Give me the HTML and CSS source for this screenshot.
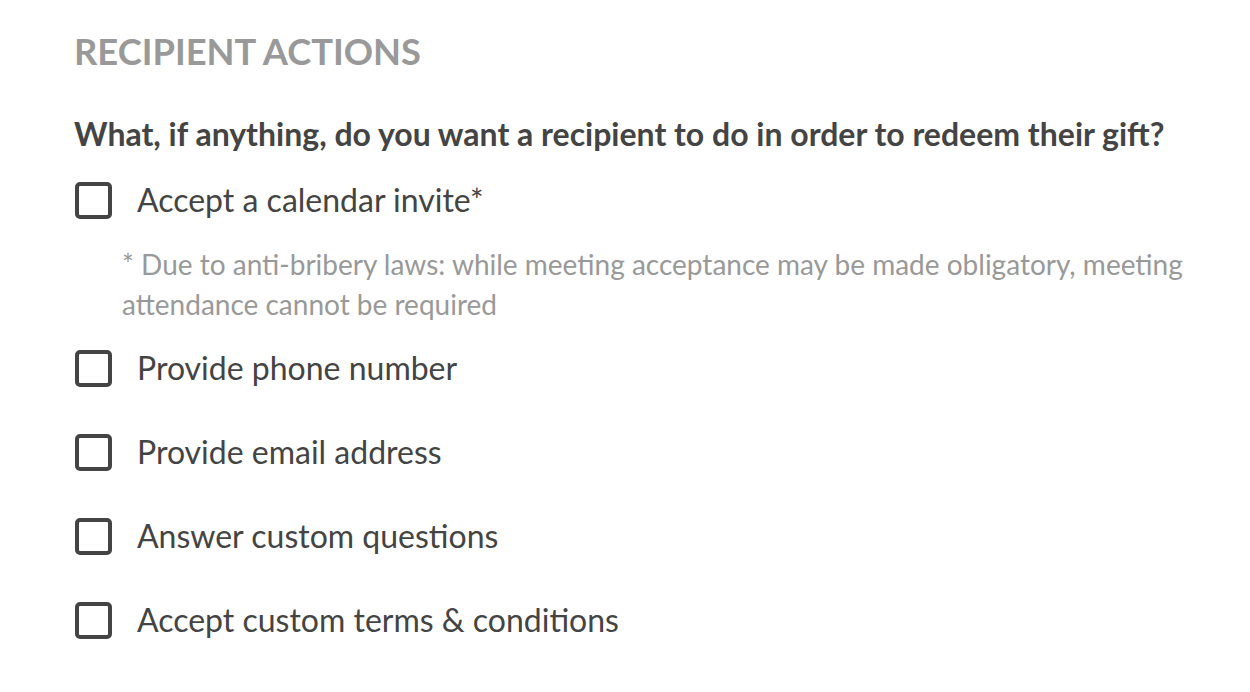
FILE: index.html
```html
<!DOCTYPE html>
<html>
<head>
<meta charset="utf-8">
<link rel="stylesheet" href="styles.css">
</head>
<body>
<section class="panel">
  <h2 class="title">RECIPIENT ACTIONS</h2>
  <p class="question">What, if anything, do you want a recipient to do in order to redeem their gift?</p>
  <ul class="options">
    <li class="option">
      <label class="row"><span class="box"></span><span class="label">Accept a calendar invite*</span></label>
      <p class="note">* Due to anti-bribery laws: while meeting acceptance may be made obligatory, meeting attendance cannot be required</p>
    </li>
    <li class="option">
      <label class="row"><span class="box"></span><span class="label">Provide phone number</span></label>
    </li>
    <li class="option">
      <label class="row"><span class="box"></span><span class="label">Provide email address</span></label>
    </li>
    <li class="option">
      <label class="row"><span class="box"></span><span class="label">Answer custom questions</span></label>
    </li>
    <li class="option">
      <label class="row"><span class="box"></span><span class="label">Accept custom terms &amp; conditions</span></label>
    </li>
  </ul>
</section>
</body>
</html>
```
FILE: styles.css
```css
* { box-sizing: border-box; }
html, body { margin: 0; padding: 0; background: #fff; }
body { font-family: Lato, "Open Sans", sans-serif; color: #444; }
.panel { padding: 29px 40px 0 74px; }
.title {
  margin: 0;
  font-size: 36.3px;
  line-height: 44px;
  font-weight: 700;
  color: #999;
}
.question {
  margin: 41px 0 0;
  font-size: 32px;
  line-height: 40px;
  font-weight: 700;
  color: #444;
}
.options { list-style: none; margin: 4px 0 0; padding: 0; display: flex; flex-direction: column; }
.row { display: flex; align-items: center; gap: 25px; padding: 22px 0; cursor: pointer; }
.box {
  width: 37px; height: 37px;
  border: 4px solid #444;
  border-radius: 5px;
  flex: none;
  margin-left: 1px;
}
.label { font-size: 32px; line-height: 40px; color: #444; }
.note {
  margin: 2px 0 2px 48px;
  font-size: 28px;
  line-height: 40px;
  color: #999;
}
```
